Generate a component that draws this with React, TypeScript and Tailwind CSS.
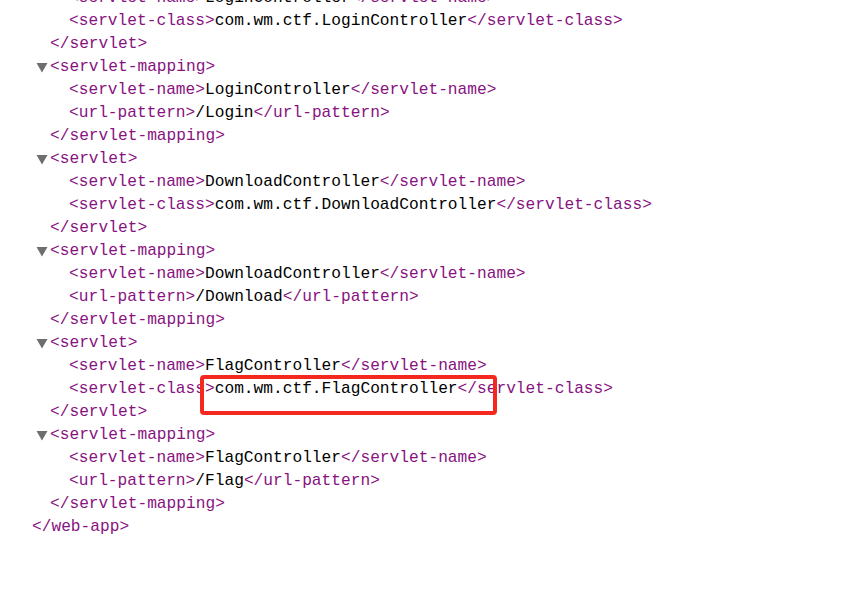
import React from "react";

type Seg = { t: string; tag?: boolean };
type Row = { level: 0 | 1 | 2; open?: boolean; segs: Seg[] };

const tag = (t: string): Seg => ({ t, tag: true });
const txt = (t: string): Seg => ({ t });

const el = (name: string, value: string): Seg[] => [tag(`<${name}>`), txt(value), tag(`</${name}>`)];

const rows: Row[] = [
    { level: 2, segs: el("servlet-name", "LoginController") },
    { level: 2, segs: el("servlet-class", "com.wm.ctf.LoginController") },
    { level: 1, segs: [tag("</servlet>")] },
    { level: 1, open: true, segs: [tag("<servlet-mapping>")] },
    { level: 2, segs: el("servlet-name", "LoginController") },
    { level: 2, segs: el("url-pattern", "/Login") },
    { level: 1, segs: [tag("</servlet-mapping>")] },
    { level: 1, open: true, segs: [tag("<servlet>")] },
    { level: 2, segs: el("servlet-name", "DownloadController") },
    { level: 2, segs: el("servlet-class", "com.wm.ctf.DownloadController") },
    { level: 1, segs: [tag("</servlet>")] },
    { level: 1, open: true, segs: [tag("<servlet-mapping>")] },
    { level: 2, segs: el("servlet-name", "DownloadController") },
    { level: 2, segs: el("url-pattern", "/Download") },
    { level: 1, segs: [tag("</servlet-mapping>")] },
    { level: 1, open: true, segs: [tag("<servlet>")] },
    { level: 2, segs: el("servlet-name", "FlagController") },
    { level: 2, segs: el("servlet-class", "com.wm.ctf.FlagController") },
    { level: 1, segs: [tag("</servlet>")] },
    { level: 1, open: true, segs: [tag("<servlet-mapping>")] },
    { level: 2, segs: el("servlet-name", "FlagController") },
    { level: 2, segs: el("url-pattern", "/Flag") },
    { level: 1, segs: [tag("</servlet-mapping>")] },
    { level: 0, segs: [tag("</web-app>")] },
];

const Arrow = () => (
    <svg width="14" height="23" viewBox="0 0 14 23" className="shrink-0">
        <polygon points="0.5,7 11.5,7 6,16.5" fill="#6e6e6e" />
    </svg>
);

const Line = ({ row }: { row: Row }) => {
    const pad = row.level === 0 ? "pl-[32px]" : row.level === 1 ? (row.open ? "pl-[36px]" : "pl-[50px]") : "pl-[69px]";
    return (
        <div className={`flex h-[23px] items-center whitespace-pre ${pad}`}>
            {row.open && <Arrow />}
            {row.segs.map((s, i) => (
                <span key={i} className={s.tag ? "text-[#881280]" : "text-black"}>{s.t}</span>
            ))}
        </div>
    );
};

export default function App() {
    return (
        <div className="relative h-[589px] w-[841px] overflow-hidden bg-white font-['Liberation_Mono',monospace] text-[16.2px] leading-[23px]">
            <div className="-mt-[13px]">
                {rows.map((r, i) => (
                    <Line key={i} row={r} />
                ))}
            </div>
            {/* highlight box */}
            <div className="absolute left-[200px] top-[375px] h-[40px] w-[297px] rounded-[4px] border-[4px] border-[#f5281f]"></div>
        </div>
    );
}
